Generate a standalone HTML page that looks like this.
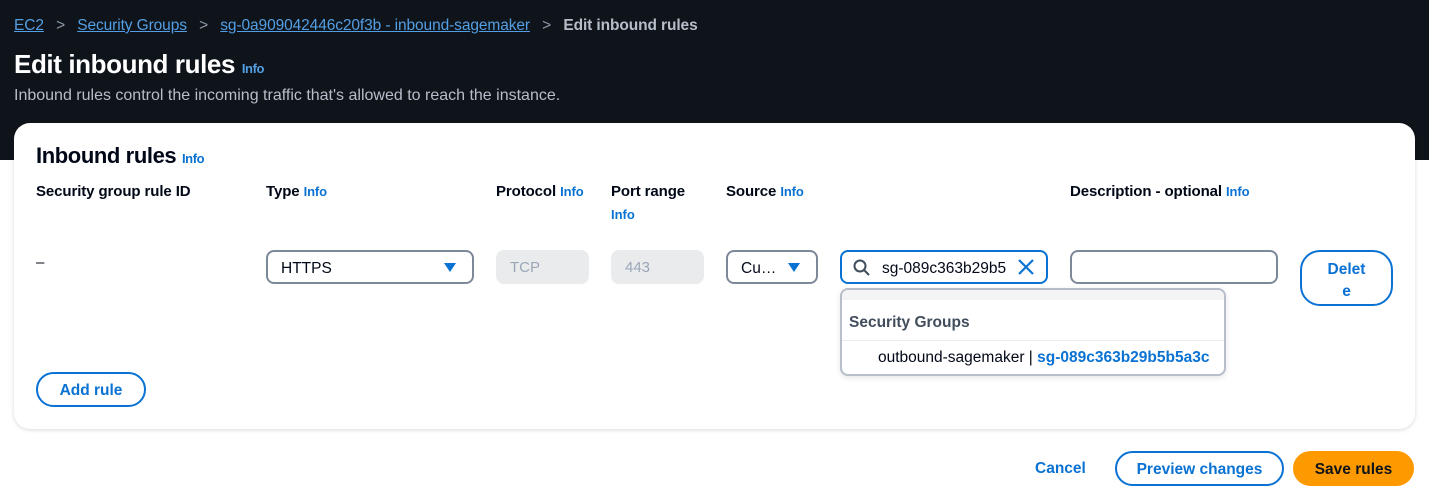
<!DOCTYPE html>
<html><head><style>
*{box-sizing:border-box;margin:0;padding:0}
body{width:1429px;height:501px;background:#fff;font-family:"Liberation Sans",sans-serif;position:relative;overflow:hidden;color:#000716}
.hdr{position:absolute;left:0;top:0;width:1429px;height:160px;background:#0f141a}
.a{position:absolute;white-space:nowrap}
.bc{top:17px;font-size:15.5px;color:#fff;letter-spacing:-0.1px}
.bc a{color:#539fe5;text-decoration:underline}
.info{color:#0972d3;font-weight:bold;font-size:13px}
.card{position:absolute;left:14px;top:123px;width:1401px;height:306px;background:#fff;border-radius:16px;box-shadow:0 1px 4px rgba(0,7,22,.15)}
.lbl{font-weight:bold;font-size:15px;letter-spacing:-0.1px}
.box{position:absolute;height:34px;border:2px solid #7d8998;border-radius:8px;background:#fff;font-size:15.5px;padding:8px 13px;white-space:nowrap}
.dis{position:absolute;height:34px;background:#e9ebed;border-radius:8px;color:#9ba7b6;font-size:15px;padding:9px 14px}
.btn{position:absolute;border:2px solid #0972d3;border-radius:20px;color:#0972d3;font-weight:bold;font-size:15.5px;text-align:center;background:#fff}
.tri{position:absolute;width:0;height:0;border-left:6px solid transparent;border-right:6px solid transparent;border-top:9px solid #0972d3}
</style></head><body>
<div class="hdr"></div>
<div class="a bc" style="left:14px"><a>EC2</a> <span style="color:#8d99a8;margin:0 8px">&gt;</span> <a>Security Groups</a> <span style="color:#8d99a8;margin:0 8px">&gt;</span> <a>sg-0a909042446c20f3b - inbound-sagemaker</a> <span style="color:#8d99a8;margin:0 8px">&gt;</span> <b style="color:#b6bec9">Edit inbound rules</b></div>
<div class="a" style="left:14px;top:49px;font-size:26px;font-weight:bold;color:#fff;letter-spacing:-0.4px">Edit inbound rules <span class="info" style="color:#539fe5">Info</span></div>
<div class="a" style="left:14px;top:87px;font-size:16px;color:#b6bec9">Inbound rules control the incoming traffic that's allowed to reach the instance.</div>
<div class="card"></div>
<div class="a" style="left:36px;top:143px;font-size:22px;font-weight:bold;letter-spacing:-0.4px">Inbound rules <span class="info">Info</span></div>
<div class="a lbl" style="left:36px;top:183px">Security group rule ID</div>
<div class="a lbl" style="left:266px;top:183px">Type <span class="info">Info</span></div>
<div class="a lbl" style="left:496px;top:183px">Protocol <span class="info">Info</span></div>
<div class="a lbl" style="left:611px;top:183px">Port range</div>
<div class="a info" style="left:611px;top:207px">Info</div>
<div class="a lbl" style="left:726px;top:183px">Source <span class="info">Info</span></div>
<div class="a lbl" style="left:1070px;top:183px">Description - optional <span class="info">Info</span></div>
<div class="a" style="left:36px;top:254px;font-size:15px">–</div>
<div class="box" style="left:266px;top:250px;width:208px">HTTPS</div><div class="tri" style="left:444px;top:263px"></div>
<div class="dis" style="left:496px;top:250px;width:93px">TCP</div>
<div class="dis" style="left:611px;top:250px;width:93px">443</div>
<div class="box" style="left:726px;top:250px;width:92px">Cu…</div><div class="tri" style="left:788px;top:263px"></div>
<div class="box" style="left:840px;top:250px;width:208px;border-color:#0972d3;padding-left:40px;padding-right:0;overflow:hidden"><div style="width:126px;overflow:hidden">sg-089c363b29b5</div></div>
<svg class="a" style="left:852px;top:258px" width="20" height="20" viewBox="0 0 20 20"><circle cx="8" cy="8" r="5.5" fill="none" stroke="#414d5c" stroke-width="2"/><path d="M12 12l5 5" stroke="#414d5c" stroke-width="2"/></svg>
<svg class="a" style="left:1017px;top:258px" width="18" height="18" viewBox="0 0 18 18"><path d="M2 2l14 14M16 2L2 16" stroke="#0972d3" stroke-width="2.2"/></svg>
<div class="box" style="left:1070px;top:250px;width:208px"></div>
<div class="btn" style="left:1300px;top:250px;width:93px;height:56px;padding-top:7px;line-height:22px">Delet<br>e</div>
<div class="a" style="left:840px;top:288px;width:386px;height:88px;border:2px solid #b6bec9;border-radius:8px;background:#fff;box-shadow:0 2px 6px rgba(0,7,22,.1)">
<div style="height:10px;background:#f4f4f4;border-radius:6px 6px 0 0"></div>
<div style="padding:14px 7px 8px;font-weight:bold;font-size:15.5px;color:#414d5c;border-bottom:1px solid #e9ebed">Security Groups</div>
<div style="padding:8px 0 0 36px;font-size:15.5px">outbound-sagemaker | <b style="color:#0972d3">sg-089c363b29b5b5a3c</b></div>
</div>
<div class="btn" style="left:36px;top:372px;width:110px;height:35px;line-height:33px">Add rule</div>
<div class="a" style="left:1035px;top:460px;font-weight:bold;font-size:15.5px;color:#0972d3">Cancel</div>
<div class="btn" style="left:1115px;top:451px;width:169px;height:35px;line-height:33px">Preview changes</div>
<div class="btn" style="left:1293px;top:451px;width:121px;height:35px;line-height:33px;background:#ff9900;border-color:#ff9900;color:#0f141a">Save rules</div>
</body></html>
